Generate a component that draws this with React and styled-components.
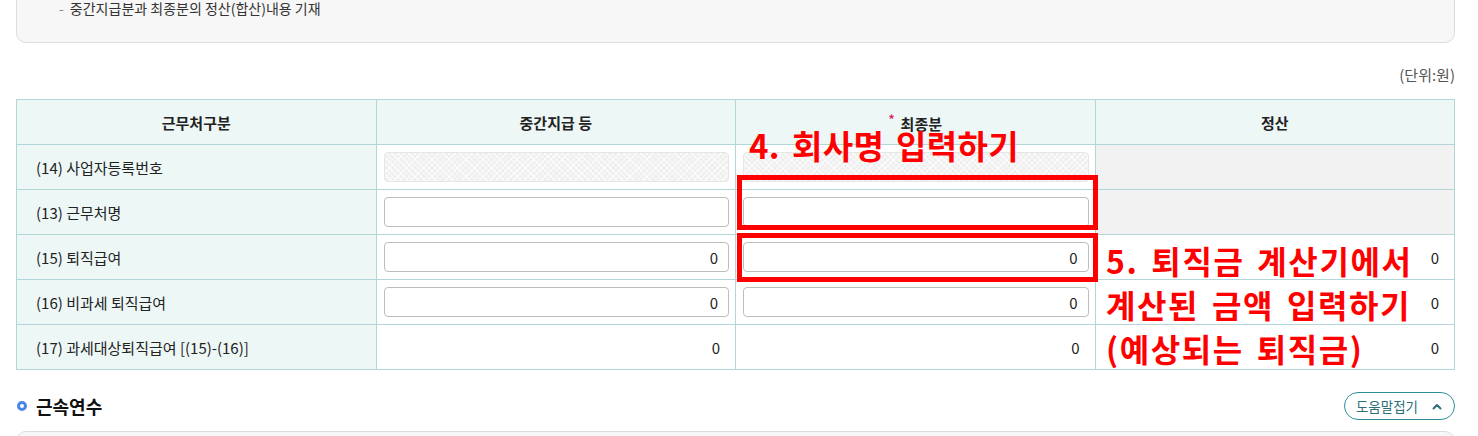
import React from 'react';
import styled, { createGlobalStyle } from 'styled-components';

const GlobalStyle = createGlobalStyle`
  body {
    margin: 0;
    background: #fff;
    font-family: "Noto Sans CJK KR", "Noto Sans", sans-serif;
    color: #222;
  }
`;

const Page = styled.div`
  width: 1439px;
  margin-left: 16px;
`;

const NoticeBox = styled.div`
  margin-top: -20px;
  padding: 18px 20px 25px 42px;
  background: #f7f7f7;
  border: 1px solid #dcdcdc;
  border-radius: 0 0 10px 10px;
  font-size: 14px;
  line-height: 18px;
  color: #333;
`;

const Dash = styled.span`
  color: #888;
  margin-right: 6px;
`;

const UnitRow = styled.div`
  margin: 22px 0 14px;
  text-align: right;
  font-size: 15px;
  line-height: 20px;
  color: #555;
`;

const TableWrap = styled.div`
  position: relative;
`;

const Table = styled.table`
  width: 100%;
  border-collapse: collapse;
  table-layout: fixed;
  font-size: 15px;

  th, td {
    border: 1px solid #b3d6d9;
    height: 45px;
    box-sizing: border-box;
  }
`;

const Th = styled.th`
  background: #edf7f6;
  font-weight: 700;
  color: #222;
  text-align: center;
`;

const Required = styled.sup`
  color: #e0245e;
  font-size: 12px;
  margin-right: 6px;
`;

const LabelCell = styled.td`
  background: #edf7f6;
  padding-left: 19px;
  text-align: left;
`;

const InputCell = styled.td`
  padding: 0 6px 0 7px;
`;

const ValueCell = styled.td`
  padding-right: 15px;
  text-align: right;
  background: ${({ $empty }) => ($empty ? '#f2f2f2' : '#fff')};
`;

const Field = styled.input`
  display: block;
  width: 100%;
  height: 30px;
  box-sizing: border-box;
  border: 1px solid #bdbdbd;
  border-radius: 4px;
  padding: 0 10px;
  font: inherit;
  font-size: 15px;
  text-align: right;
  color: #222;
  background: #fff;

  &:disabled {
    border-color: #e6e6e6;
    background-color: #efefef;
    background-image:
      repeating-linear-gradient(45deg, rgba(255,255,255,0.7) 0 1px, transparent 1px 4px),
      repeating-linear-gradient(-45deg, rgba(255,255,255,0.7) 0 1px, transparent 1px 4px);
  }
`;

const Note = styled.div`
  position: absolute;
  left: ${({ $x }) => $x}px;
  top: ${({ $y }) => $y}px;
  color: #ff0000;
  font-weight: 700;
  font-size: ${({ $size }) => $size}px;
  letter-spacing: ${({ $spacing = 0 }) => $spacing}px;
  line-height: 44px;
  white-space: nowrap;
  word-spacing: 4px;
`;

const Highlight = styled.div`
  position: absolute;
  left: ${({ $x }) => $x}px;
  top: ${({ $y }) => $y}px;
  width: ${({ $w }) => $w}px;
  height: ${({ $h }) => $h}px;
  box-sizing: border-box;
  border: 5px solid #ff0000;
`;

const SectionHeader = styled.div`
  display: flex;
  align-items: center;
  justify-content: space-between;
  margin-top: 22px;
  height: 28px;
`;

const SectionTitle = styled.h3`
  display: flex;
  align-items: center;
  gap: 9px;
  margin: 0;
  font-size: 18px;
  font-weight: 700;
  color: #111;
`;

const Ring = styled.span`
  width: 10px;
  height: 10px;
  box-sizing: border-box;
  border: 3px solid #4a86e8;
  border-radius: 50%;
  margin-left: 1px;
`;

const ToggleButton = styled.button`
  display: flex;
  align-items: center;
  gap: 14px;
  height: 28px;
  padding: 0 12px 0 11px;
  border: 1px solid #2e8e9b;
  border-radius: 14px;
  background: #fff;
  color: #2f6f7a;
  font: inherit;
  font-size: 13.5px;
`;

const HelpBox = styled.div`
  margin-top: 11px;
  height: 40px;
  background: #f7f7f7;
  border: 1px solid #dcdcdc;
  border-radius: 10px 10px 0 0;
`;

const rows = [
  { label: '(14) 사업자등록번호', kind: 'disabled' },
  { label: '(13) 근무처명', kind: 'text' },
  { label: '(15) 퇴직급여', kind: 'number' },
  { label: '(16) 비과세 퇴직급여', kind: 'number' },
  { label: '(17) 과세대상퇴직급여 [(15)-(16)]', kind: 'plain' },
];

const Cell = ({ kind }) => {
  if (kind === 'plain') return <ValueCell>0</ValueCell>;
  return (
    <InputCell>
      <Field
        disabled={kind === 'disabled'}
        defaultValue={kind === 'number' ? '0' : ''}
      />
    </InputCell>
  );
};

const App = () => (
  <Page>
    <GlobalStyle />
    <NoticeBox>
      <Dash>-</Dash>중간지급분과 최종분의 정산(합산)내용 기재
    </NoticeBox>
    <UnitRow>(단위:원)</UnitRow>
    <TableWrap>
      <Table>
        <thead>
          <tr>
            <Th>근무처구분</Th>
            <Th>중간지급 등</Th>
            <Th><Required>*</Required>최종분</Th>
            <Th>정산</Th>
          </tr>
        </thead>
        <tbody>
          {rows.map(({ label, kind }) => (
            <tr key={label}>
              <LabelCell>{label}</LabelCell>
              <Cell kind={kind} />
              <Cell kind={kind} />
              {kind === 'disabled' || kind === 'text'
                ? <ValueCell $empty />
                : <ValueCell>0</ValueCell>}
            </tr>
          ))}
        </tbody>
      </Table>
      <Note $x={733} $y={24} $size={33} $spacing={0.4}>4. 회사명 입력하기</Note>
      <Highlight $x={721} $y={76} $w={361} $h={55} />
      <Highlight $x={721} $y={134} $w={361} $h={49} />
      <Note $x={1090} $y={139} $size={32} $spacing={1.6}>
        5. 퇴직금 계산기에서<br />계산된 금액 입력하기<br />(예상되는 퇴직금)
      </Note>
    </TableWrap>
    <SectionHeader>
      <SectionTitle><Ring />근속연수</SectionTitle>
      <ToggleButton>
        도움말접기
        <svg width="10" height="7" viewBox="0 0 10 7" fill="none">
          <path d="M1.5 5.5 L5 2 L8.5 5.5" stroke="#2f6f7a" strokeWidth="2" strokeLinecap="round" strokeLinejoin="round" />
        </svg>
      </ToggleButton>
    </SectionHeader>
    <HelpBox />
  </Page>
);

export default App;
